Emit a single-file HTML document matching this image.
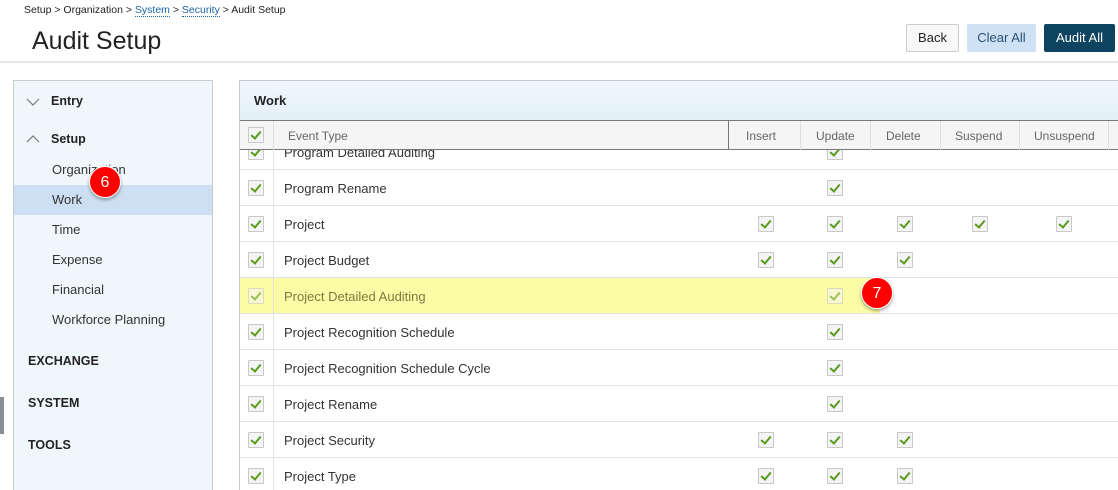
<!DOCTYPE html>
<html style="width:1118px;height:490px;overflow:hidden"><head><meta charset="utf-8"><style>
*{box-sizing:border-box;margin:0;padding:0}
body{width:1118px;height:490px;overflow:hidden;background:#fff;font-family:"Liberation Sans",sans-serif;color:#333;position:relative}
.a{position:absolute}
.bc{left:24px;top:4px;font-size:10.5px;color:#222}
.bc span{color:#1a64a8;border-bottom:1px dotted #1a64a8}
h1{position:absolute;left:32px;top:27px;font-size:25px;font-weight:normal;color:#222}
.hdr{left:0;top:61px;width:1118px;height:3px;background:linear-gradient(#ddd,#fff)}
.btn{top:24px;height:28px;font-size:13px;line-height:28px;text-align:center;border-radius:2px}
.side{left:13px;top:80px;width:200px;height:420px;background:#f0f7fb;border:1px solid #ccc}
.si{position:absolute;font-size:13px;color:#333}
.sb{font-weight:bold;color:#222;font-size:12.5px}
.main{left:239px;top:80px;width:890px;height:420px;border:1px solid #c8c8c8;border-right:none}
.wh{left:240px;top:81px;width:878px;height:40px;background:linear-gradient(#f0f7fb,#e3f0f8);border-bottom:1px solid #777}
.th{left:240px;top:121px;width:878px;height:29px;background:#f5f5f5;border-bottom:1px solid #777;font-size:12px;color:#666}
.cb{position:absolute;width:16px;height:16px;border:1px solid #c8c8c8;background:#f4f4f4;border-radius:1px}
.cb:after{content:"";position:absolute;left:4px;top:1px;width:4px;height:8px;border:solid #5a9a1e;border-width:0 2px 2px 0;transform:rotate(40deg)}
.row{position:absolute;left:240px;width:878px;height:36px;border-bottom:1px solid #e2e2e2;font-size:13px}
.badge{position:absolute;width:32px;height:32px;border-radius:50%;background:#f00;color:#fff;font-size:16px;text-align:center;line-height:32px;box-shadow:0 2px 3px rgba(0,0,0,.35);border:1px solid #fff}
</style></head><body>
<div class="a bc">Setup &gt; Organization &gt; <span>System</span> &gt; <span>Security</span> &gt; Audit Setup</div>
<h1>Audit Setup</h1>
<div class="a btn" style="left:906px;width:53px;border:1px solid #ccc;background:#f8f8f8;color:#222;line-height:26px">Back</div>
<div class="a btn" style="left:967px;width:69px;background:#cfe2f5;color:#2a4f73">Clear All</div>
<div class="a btn" style="left:1044px;width:71px;background:#0f4460;color:#fff">Audit All</div>
<div class="a hdr"></div>
<div class="a" style="left:0;top:397px;width:4px;height:37px;background:#8a8d93"></div>
<div class="a side"></div>
<svg class="a" style="left:26px;top:97px" width="14" height="10"><path d="M1 2 L7 8 L13 2" stroke="#777" fill="none" stroke-width="1.2"/></svg>
<div class="si sb" style="left:51px;top:94px">Entry</div>
<svg class="a" style="left:26px;top:134px" width="14" height="10"><path d="M1 8 L7 2 L13 8" stroke="#777" fill="none" stroke-width="1.2"/></svg>
<div class="si sb" style="left:51px;top:132px">Setup</div>
<div class="si" style="left:52px;top:162px">Organization</div>
<div class="a" style="left:14px;top:185px;width:198px;height:30px;background:#cde0f3"></div>
<div class="si" style="left:52px;top:192px">Work</div>
<div class="si" style="left:52px;top:222px">Time</div>
<div class="si" style="left:52px;top:252px">Expense</div>
<div class="si" style="left:52px;top:282px">Financial</div>
<div class="si" style="left:52px;top:312px">Workforce Planning</div>
<div class="si sb" style="left:28px;top:354px">EXCHANGE</div>
<div class="si sb" style="left:28px;top:396px">SYSTEM</div>
<div class="si sb" style="left:28px;top:438px">TOOLS</div>
<div class="badge" style="left:89px;top:166px">6</div>

<div class="a main"></div>
<div class="a wh"><div class="a" style="left:14px;top:12px;font-weight:bold;font-size:13px;color:#222">Work</div></div>

<div class="row" style="top:134px;height:36px"><div class="cb" style="left:8px;top:10px"></div><div class="a" style="left:44px;top:11px">Program Detailed Auditing</div><div class="cb" style="left:587px;top:10px"></div></div>
<div class="row" style="top:170px"><div class="cb" style="left:8px;top:10px"></div><div class="a" style="left:44px;top:11px">Program Rename</div><div class="cb" style="left:587px;top:10px"></div></div>
<div class="row" style="top:206px"><div class="cb" style="left:8px;top:10px"></div><div class="a" style="left:44px;top:11px">Project</div><div class="cb" style="left:518px;top:10px"></div><div class="cb" style="left:587px;top:10px"></div><div class="cb" style="left:657px;top:10px"></div><div class="cb" style="left:732px;top:10px"></div><div class="cb" style="left:816px;top:10px"></div></div>
<div class="row" style="top:242px"><div class="cb" style="left:8px;top:10px"></div><div class="a" style="left:44px;top:11px">Project Budget</div><div class="cb" style="left:518px;top:10px"></div><div class="cb" style="left:587px;top:10px"></div><div class="cb" style="left:657px;top:10px"></div></div>
<div class="row" style="top:278px"><div class="a" style="left:0;top:0;width:640px;height:35px;background:#fdfca6"></div><div class="cb" style="left:8px;top:10px;opacity:.6"></div><div class="a" style="left:44px;top:11px;color:#7a7a40">Project Detailed Auditing</div><div class="cb" style="left:587px;top:10px;opacity:.6"></div></div>
<div class="row" style="top:314px"><div class="cb" style="left:8px;top:10px"></div><div class="a" style="left:44px;top:11px">Project Recognition Schedule</div><div class="cb" style="left:587px;top:10px"></div></div>
<div class="row" style="top:350px"><div class="cb" style="left:8px;top:10px"></div><div class="a" style="left:44px;top:11px">Project Recognition Schedule Cycle</div><div class="cb" style="left:587px;top:10px"></div></div>
<div class="row" style="top:386px"><div class="cb" style="left:8px;top:10px"></div><div class="a" style="left:44px;top:11px">Project Rename</div><div class="cb" style="left:587px;top:10px"></div></div>
<div class="row" style="top:422px"><div class="cb" style="left:8px;top:10px"></div><div class="a" style="left:44px;top:11px">Project Security</div><div class="cb" style="left:518px;top:10px"></div><div class="cb" style="left:587px;top:10px"></div><div class="cb" style="left:657px;top:10px"></div></div>
<div class="row" style="top:458px"><div class="cb" style="left:8px;top:10px"></div><div class="a" style="left:44px;top:11px">Project Type</div><div class="cb" style="left:518px;top:10px"></div><div class="cb" style="left:587px;top:10px"></div><div class="cb" style="left:657px;top:10px"></div></div>
<div class="a" style="left:273px;top:150px;width:1px;height:340px;background:#e2e2e2"></div>

<div class="a th">
<div class="cb" style="left:8px;top:6px"></div>
<div class="a" style="left:33px;top:0;width:1px;height:29px;background:#ddd"></div>
<div class="a" style="left:48px;top:8px">Event Type</div>
<div class="a" style="left:488px;top:0;width:1px;height:29px;background:#777"></div>
<div class="a" style="left:560px;top:0;width:1px;height:29px;background:#ddd"></div>
<div class="a" style="left:506px;top:8px">Insert</div>
<div class="a" style="left:576px;top:8px">Update</div>
<div class="a" style="left:630px;top:0;width:1px;height:29px;background:#ddd"></div>
<div class="a" style="left:646px;top:8px">Delete</div>
<div class="a" style="left:700px;top:0;width:1px;height:29px;background:#ddd"></div>
<div class="a" style="left:715px;top:8px">Suspend</div>
<div class="a" style="left:779px;top:0;width:1px;height:29px;background:#ddd"></div>
<div class="a" style="left:794px;top:8px">Unsuspend</div>
<div class="a" style="left:868px;top:0;width:1px;height:29px;background:#ddd"></div>
</div>
<div class="badge" style="left:861px;top:277px">7</div>
</body></html>
